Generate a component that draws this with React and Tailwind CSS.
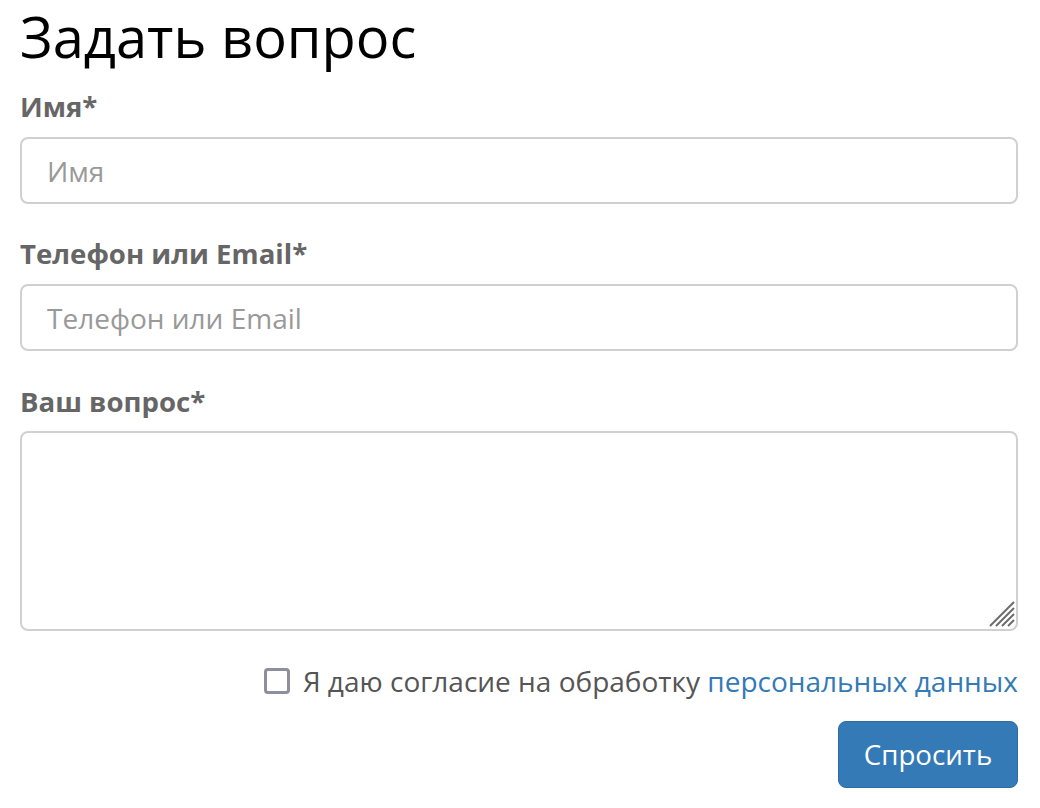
export default function App() {
  const font = { fontFamily: '"Open Sans", "Noto Sans", sans-serif' };
  return (
    <div className="w-[1040px] h-[808px] bg-white pl-[20px] pr-[22px]" style={font}>
      <h1 className="text-[56px] leading-[72px] text-black font-normal m-0">Задать вопрос</h1>
      <label className="block mt-[18px] text-[27.6px] leading-[32px] font-bold text-[#666]">Имя*</label>
      <input
        className="mt-[15px] block w-full h-[67px] border-2 border-[#d0d0d0] rounded-[8px] px-[25px] text-[28px] text-[#555] placeholder:text-[#999] outline-none"
        placeholder="Имя"
      />
      <label className="block mt-[33px] text-[27.6px] leading-[32px] font-bold text-[#666]">Телефон или Email*</label>
      <input
        className="mt-[15px] block w-full h-[67px] border-2 border-[#d0d0d0] rounded-[8px] px-[25px] text-[28px] text-[#555] placeholder:text-[#999] outline-none"
        placeholder="Телефон или Email"
      />
      <label className="block mt-[34px] text-[27.6px] leading-[32px] font-bold text-[#666]">Ваш вопрос*</label>
      <div className="relative mt-[14px]">
        <textarea className="block w-full h-[200px] border-2 border-[#d0d0d0] rounded-[8px] px-[25px] py-[14px] text-[28px] text-[#555] outline-none resize-none" />
        <svg className="absolute right-[3px] bottom-[4px]" width="26" height="26" viewBox="0 0 26 26">
          <g stroke="#6b6b6b" strokeWidth="2" strokeLinecap="butt">
            <line x1="1" y1="25" x2="25" y2="1" />
            <line x1="7" y1="25" x2="25" y2="7" />
            <line x1="13" y1="25" x2="25" y2="13" />
            <line x1="19" y1="25" x2="25" y2="19" />
          </g>
        </svg>
      </div>
      <div className="flex justify-end items-center mt-[34px] gap-[13px]">
        <span className="w-[26px] h-[26px] border-[3px] border-[#8e8e9c] rounded-[4px] bg-white" />
        <span className="text-[28px] leading-[32px] text-[#555]">
          Я даю согласие на обработку <a className="text-[#337ab7]">персональных данных</a>
        </span>
      </div>
      <div className="flex justify-end mt-[24px]">
        <button className="w-[180px] h-[67px] bg-[#337ab7] rounded-[8px] text-white text-[27.7px] border border-[#2e6da4]">Спросить</button>
      </div>
    </div>
  );
}
